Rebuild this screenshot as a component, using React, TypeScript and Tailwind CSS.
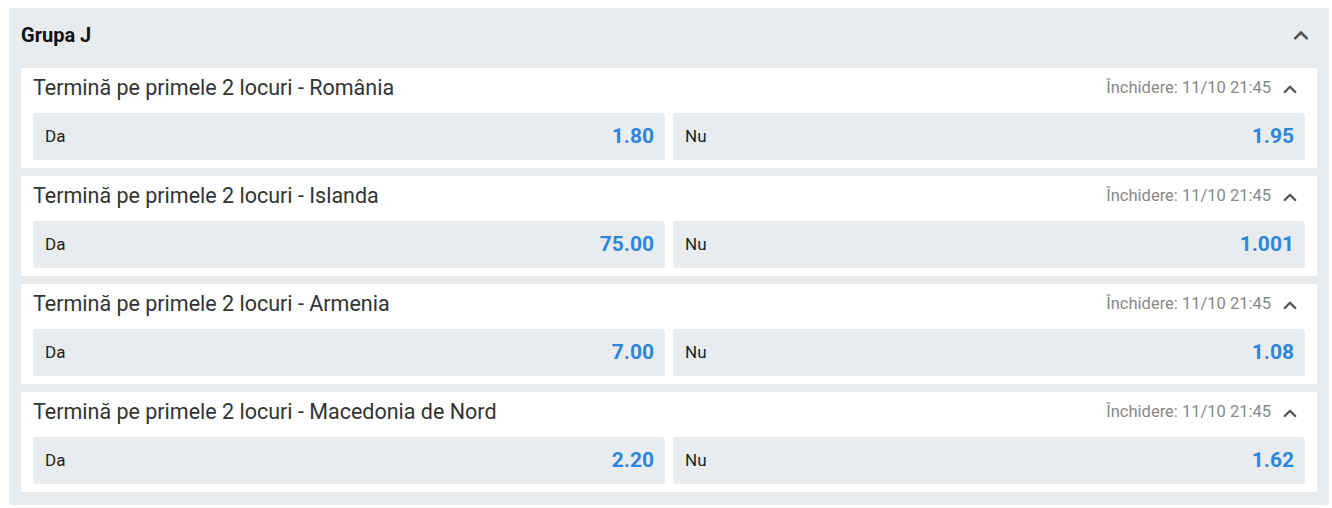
import React from "react";

interface Market {
  team: string;
  da: string;
  nu: string;
}

const markets: Market[] = [
  { team: "România", da: "1.80", nu: "1.95" },
  { team: "Islanda", da: "75.00", nu: "1.001" },
  { team: "Armenia", da: "7.00", nu: "1.08" },
  { team: "Macedonia de Nord", da: "2.20", nu: "1.62" },
];

const ChevronUp = ({ className }: { className?: string }) => (
  <svg viewBox="0 0 24 24" className={className} fill="none" stroke="currentColor" strokeWidth={3.2} strokeLinecap="round" strokeLinejoin="round">
    <polyline points="5,16 12,9 19,16" />
  </svg>
);

const OddButton = ({ label, odd }: { label: string; odd: string }) => (
  <button className="flex-1 h-[47px] bg-[#e9ecef] rounded-[3px] flex items-center justify-between pl-3 pr-[11px]">
    <span className="text-[17px] text-[#222]">{label}</span>
    <span className="text-[21px] font-bold text-[#2b86dc]">{odd}</span>
  </button>
);

export default function App() {
  return (
    <div className="w-[1332px] h-[508px] bg-white pt-2 pl-[9px] pr-[3px] font-['Roboto',sans-serif]">
      <div className="bg-[#e9ecef] rounded-[3px] px-3 pb-[13px]">
        <div className="h-[60px] pb-[6px] flex items-center justify-between">
          <span className="text-[20px] font-bold text-[#111]">Grupa J</span>
          <ChevronUp className="w-[20px] h-[20px] text-[#555] mr-[6px]" />
        </div>
        <div className="flex flex-col gap-2">
          {markets.map((m) => (
            <div key={m.team} className="bg-white pl-3 pr-3 pb-2">
              <div className="h-[45px] pb-[4px] flex items-center justify-between">
                <span className="text-[21.5px] text-[#333]">
                  Termină pe primele 2 locuri - {m.team}
                </span>
                <div className="flex items-center gap-[10px] pr-[6px]">
                  <span className="text-[16.5px] text-[#888]">Închidere: 11/10 21:45</span>
                  <ChevronUp className="w-[18px] h-[18px] text-[#555]" />
                </div>
              </div>
              <div className="flex gap-2">
                <OddButton label="Da" odd={m.da} />
                <OddButton label="Nu" odd={m.nu} />
              </div>
            </div>
          ))}
        </div>
      </div>
    </div>
  );
}
